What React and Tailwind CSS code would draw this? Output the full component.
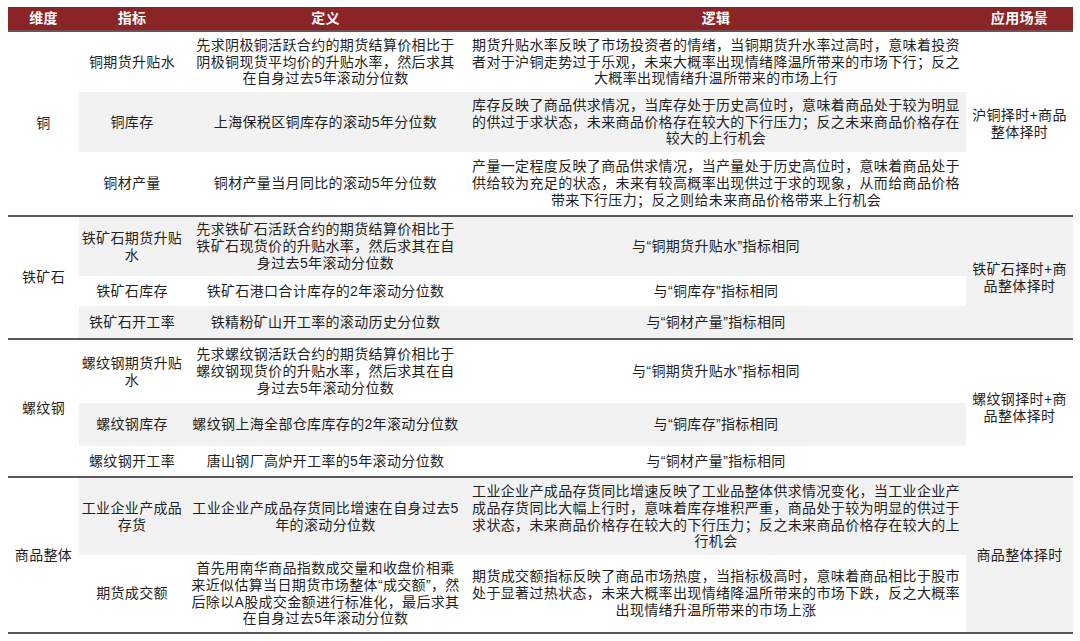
import clsx from "clsx";

const sections = [
  {
    dim: "铜",
    app: ["沪铜择时+商品", "整体择时"],
    appGray: false,
    rows: [
      {
        h: "h-[60px]",
        gray: false,
        ind: ["铜期货升贴水"],
        def: ["先求阴极铜活跃合约的期货结算价相比于", "阴极铜现货平均价的升贴水率，然后求其", "在自身过去5年滚动分位数"],
        logic: [
          "期货升贴水率反映了市场投资者的情绪，当铜期货升水率过高时，意味着投资",
          "者对于沪铜走势过于乐观，未来大概率出现情绪降温所带来的市场下行；反之",
          "大概率出现情绪升温所带来的市场上行",
        ],
      },
      {
        h: "h-[60px]",
        gray: true,
        ind: ["铜库存"],
        def: ["上海保税区铜库存的滚动5年分位数"],
        logic: [
          "库存反映了商品供求情况，当库存处于历史高位时，意味着商品处于较为明显",
          "的供过于求状态，未来商品价格存在较大的下行压力；反之未来商品价格存在",
          "较大的上行机会",
        ],
      },
      {
        h: "h-[63px]",
        gray: false,
        ind: ["铜材产量"],
        def: ["铜材产量当月同比的滚动5年分位数"],
        logic: [
          "产量一定程度反映了商品供求情况，当产量处于历史高位时，意味着商品处于",
          "供给较为充足的状态，未来有较高概率出现供过于求的现象，从而给商品价格",
          "带来下行压力；反之则给未来商品价格带来上行机会",
        ],
      },
    ],
  },
  {
    dim: "铁矿石",
    app: ["铁矿石择时+商", "品整体择时"],
    appGray: true,
    rows: [
      {
        h: "h-[59px]",
        gray: true,
        ind: ["铁矿石期货升贴", "水"],
        def: ["先求铁矿石活跃合约的期货结算价相比于", "铁矿石现货价的升贴水率，然后求其在自", "身过去5年滚动分位数"],
        logic: ["与“铜期货升贴水”指标相同"],
      },
      {
        h: "h-[30px]",
        gray: false,
        ind: ["铁矿石库存"],
        def: ["铁矿石港口合计库存的2年滚动分位数"],
        logic: ["与“铜库存”指标相同"],
      },
      {
        h: "h-[32px]",
        gray: true,
        ind: ["铁矿石开工率"],
        def: ["铁精粉矿山开工率的滚动历史分位数"],
        logic: ["与“铜材产量”指标相同"],
      },
    ],
  },
  {
    dim: "螺纹钢",
    app: ["螺纹钢择时+商", "品整体择时"],
    appGray: false,
    rows: [
      {
        h: "h-[63px]",
        gray: false,
        ind: ["螺纹钢期货升贴", "水"],
        def: ["先求螺纹钢活跃合约的期货结算价相比于", "螺纹钢现货价的升贴水率，然后求其在自", "身过去5年滚动分位数"],
        logic: ["与“铜期货升贴水”指标相同"],
      },
      {
        h: "h-[43px]",
        gray: true,
        ind: ["螺纹钢库存"],
        def: ["螺纹钢上海全部仓库库存的2年滚动分位数"],
        logic: ["与“铜库存”指标相同"],
      },
      {
        h: "h-[30px]",
        gray: false,
        ind: ["螺纹钢开工率"],
        def: ["唐山钢厂高炉开工率的5年滚动分位数"],
        logic: ["与“铜材产量”指标相同"],
      },
    ],
  },
  {
    dim: "商品整体",
    app: ["商品整体择时"],
    appGray: true,
    rows: [
      {
        h: "h-[77px]",
        gray: true,
        ind: ["工业企业产成品", "存货"],
        def: ["工业企业产成品存货同比增速在自身过去5", "年的滚动分位数"],
        logic: [
          "工业企业产成品存货同比增速反映了工业品整体供求情况变化，当工业企业产",
          "成品存货同比大幅上行时，意味着库存堆积严重，商品处于较为明显的供过于",
          "求状态，未来商品价格存在较大的下行压力；反之未来商品价格存在较大的上",
          "行机会",
        ],
      },
      {
        h: "h-[77px]",
        gray: false,
        ind: ["期货成交额"],
        def: [
          "首先用南华商品指数成交量和收盘价相乘",
          "来近似估算当日期货市场整体“成交额”，然",
          "后除以A股成交金额进行标准化，最后求其",
          "在自身过去5年滚动分位数",
        ],
        logic: [
          "期货成交额指标反映了商品市场热度，当指标极高时，意味着商品相比于股市",
          "处于显著过热状态，未来大概率出现情绪降温所带来的市场下跌，反之大概率",
          "出现情绪升温所带来的市场上涨",
        ],
      },
    ],
  },
];

function Lines({ lines }) {
  return (
    <div className="text-center">
      {lines.map((l, i) => (
        <div key={i} className="whitespace-nowrap">
          {l}
        </div>
      ))}
    </div>
  );
}

function Section({ s }) {
  return (
    <div className="flex border-b-2 border-[#595959]">
      <div className="w-[71px] flex items-center justify-center">{s.dim}</div>
      <div className="w-[887px] flex flex-col">
        {s.rows.map((r, i) => (
          <div key={i} className={clsx("flex", r.h, r.gray && "bg-[#f2f2f2]")}>
            <div className="w-[106px] flex items-center justify-center">
              <Lines lines={r.ind} />
            </div>
            <div className="w-[281px] flex items-center justify-center">
              <Lines lines={r.def} />
            </div>
            <div className="w-[500px] flex items-center justify-center">
              <Lines lines={r.logic} />
            </div>
          </div>
        ))}
      </div>
      <div className={clsx("w-[107px] flex items-center justify-center", s.appGray && "bg-[#f2f2f2]")}>
        <Lines lines={s.app} />
      </div>
    </div>
  );
}

export default function App() {
  return (
    <div
      className="w-[1080px] h-[641px] bg-white pt-[7px] pl-[8px] text-[14px] leading-[16.7px] tracking-[0.35px] text-[#1f1f1f]"
      style={{ fontFamily: '"Liberation Sans", "Noto Sans CJK SC", sans-serif' }}
    >
      <div className="w-[1065px]">
        <div className="flex h-[25px] bg-[#8b2427] border-b-2 border-[#5a5a5a] text-white font-bold">
          <div className="w-[71px] flex items-center justify-center">维度</div>
          <div className="w-[106px] flex items-center justify-center">指标</div>
          <div className="w-[281px] flex items-center justify-center">定义</div>
          <div className="w-[500px] flex items-center justify-center">逻辑</div>
          <div className="w-[107px] flex items-center justify-center">应用场景</div>
        </div>
        {sections.map((s, i) => (
          <Section key={i} s={s} />
        ))}
      </div>
    </div>
  );
}
